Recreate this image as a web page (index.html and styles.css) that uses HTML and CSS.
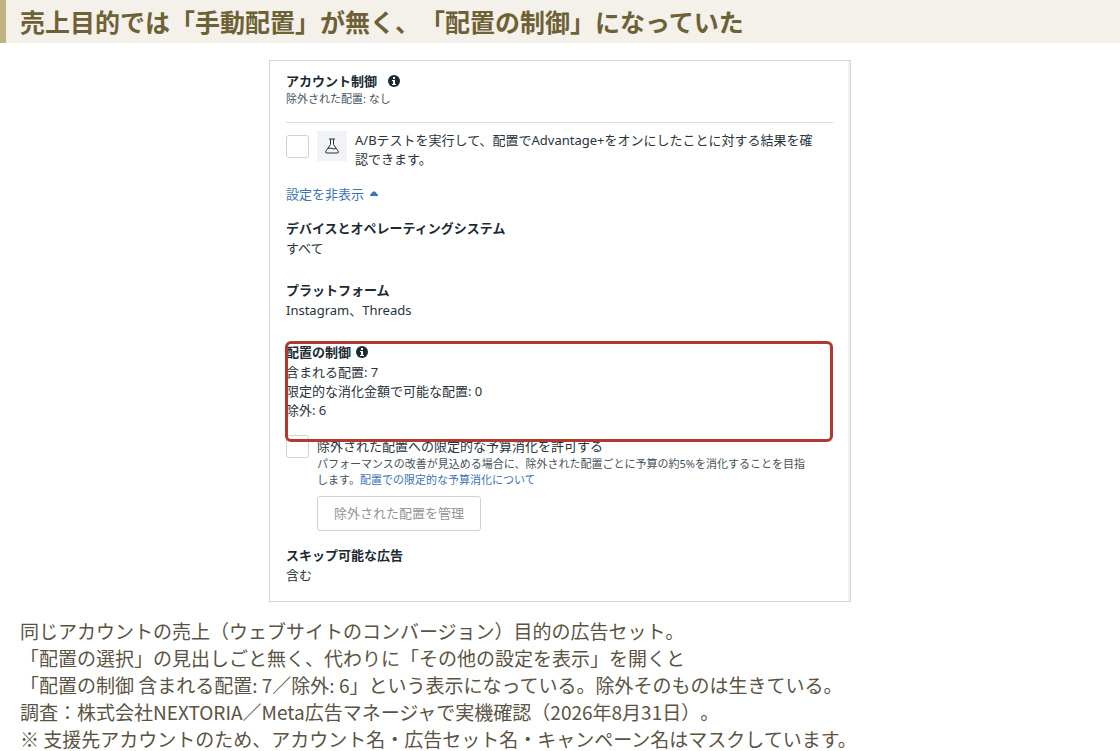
FILE: index.html
```html
<!DOCTYPE html>
<html lang="ja">
<head>
    <meta charset="UTF-8">
    <meta name="viewport" content="width=device-width, initial-scale=1.0">
    <title>配置の制御</title>
    <link rel="stylesheet" href="styles.css">
</head>
<body>

    <h1 class="titulo">売上目的では「手動配置」が無く、「配置の制御」になっていた</h1>

    <main class="panel">

        <section class="account">
            <h2>アカウント制御
                <svg class="info info-wide" viewBox="0 0 12 12" aria-hidden="true"><circle cx="6" cy="6" r="6"/><path d="M5 2h2v2H5zM4 5h3v4h1v1H4V9h1V6H4z"/></svg>
            </h2>
            <p class="small">除外された配置: なし</p>
        </section>

        <div class="ab-test">
            <div class="ab-icons">
                <input type="checkbox" id="abTest">
                <span class="flask">
                    <svg viewBox="0 0 16 16" aria-hidden="true"><path d="M5 1h6M6.500 1v5.500L1.800 13.200Q1 15 3 15h10q2 0 1.200-1.800L9.500 6.500V1M4 10.500q2-1 4 0t4 0"/></svg>
                </span>
            </div>
            <label for="abTest">A/Bテストを実行して、配置でAdvantage+をオンにしたことに対する結果を確<br>認できます。</label>
        </div>

        <a class="toggle" href="#settings">設定を非表示
            <svg viewBox="0 0 8 5" aria-hidden="true"><path d="M0 5V4l3-3.500h2L8 4v1z"/></svg>
        </a>

        <section class="group" id="settings">
            <h2>デバイスとオペレーティングシステム</h2>
            <p>すべて</p>
        </section>

        <section class="group">
            <h2>プラットフォーム</h2>
            <p>Instagram、Threads</p>
        </section>

        <section class="group control">
            <h2>配置の制御
                <svg class="info" viewBox="0 0 12 12" aria-hidden="true"><circle cx="6" cy="6" r="6"/><path d="M5 2h2v2H5zM4 5h3v4h1v1H4V9h1V6H4z"/></svg>
            </h2>
            <p>含まれる配置: 7</p>
            <p>限定的な消化金額で可能な配置: 0</p>
            <p>除外: 6</p>
        </section>

        <div class="allow">
            <input type="checkbox" id="allow">
            <div class="allow-text">
                <label for="allow">除外された配置への限定的な予算消化を許可する</label>
                <p class="small">パフォーマンスの改善が見込める場合に、除外された配置ごとに予算の約5%を消化することを目指<br>します。<a href="#about">配置での限定的な予算消化について</a></p>
                <button type="button" disabled>除外された配置を管理</button>
            </div>
        </div>

        <section class="group">
            <h2>スキップ可能な広告</h2>
            <p>含む</p>
        </section>

    </main>

    <p class="nota">
        同じアカウントの売上（ウェブサイトのコンバージョン）目的の広告セット。<br>
        「配置の選択」の見出しごと無く、代わりに「その他の設定を表示」を開くと<br>
        「配置の制御 含まれる配置: 7／除外: 6」という表示になっている。除外そのものは生きている。<br>
        調査：株式会社NEXTORIA／Meta広告マネージャで実機確認（2026年8月31日）。<br>
        ※ 支援先アカウントのため、アカウント名・広告セット名・キャンペーン名はマスクしています。
    </p>

</body>
</html>
```
FILE: styles.css
```css
* {
    box-sizing: border-box;
}
body {
    margin: 0;
    background: #fff;
    font-family: "Noto Sans CJK JP", sans-serif;
    color: #5b5344;
    text-spacing-trim: space-all;
}
h1, h2, p {
    margin: 0;
}
.titulo {
    padding: 3px 14px 4px;
    border-left: 6px solid #c1b283;
    background: #f4f1ea;
    color: #6f6136;
    font-size: 25px;
    font-weight: 700;
    line-height: 36px;
}

/* panel */
.panel {
    max-width: 582px;
    margin: 17px auto 15px;
    padding: 11px 17px 16px 16px;
    border: 1px solid #d9d6c8;
    box-shadow: inset -2px 0 #edf1f9;
    font-family: "Noto Sans", "Noto Sans CJK JP", sans-serif;
    font-size: 13px;
    line-height: 19px;
    color: #28333c;
}
.panel h2 {
    font-size: 13px;
    font-weight: 700;
    color: #1c2b33;
}
.panel .small {
    font-size: 11px;
    line-height: 16px;
    color: #46515b;
}
.panel a {
    color: #3b74b5;
    text-decoration: none;
}
.account {
    padding-bottom: 15px;
    border-bottom: 1px solid #dadde0;
}
.info {
    width: 12px;
    height: 12px;
    margin-left: 2px;
    vertical-align: -1px;
    fill: #1c2b33;
}
.info path {
    fill: #fff;
}
.info-wide {
    margin-left: 8px;
}
input[type="checkbox"] {
    appearance: none;
    flex: none;
    width: 23px;
    height: 23px;
    margin: 0;
    border: 1px solid #cfd3d7;
    border-radius: 3px;
    background: #fff;
}
.ab-test {
    display: flex;
    align-items: flex-start;
    gap: 8px;
    padding: 8px 0 16px;
}
.ab-icons {
    display: flex;
    align-items: center;
    gap: 8px;
}
.flask {
    display: flex;
    align-items: center;
    justify-content: center;
    flex: none;
    width: 30px;
    height: 30px;
    background: #f1f3f7;
}
.flask svg {
    width: 16px;
    height: 16px;
    fill: none;
    stroke: #28333c;
}
.toggle {
    display: block;
}
.toggle svg {
    width: 8px;
    height: 5px;
    margin-left: 3px;
    vertical-align: 3px;
    fill: #3b74b5;
}
.group {
    padding-top: 15px;
}
.group h2 {
    margin-bottom: 1px;
}
.group + .group {
    padding-top: 23px;
}

/* red frame around the placement controls */
.group.control {
    position: relative;
    padding-bottom: 15px;
}
.control::after {
    content: "";
    position: absolute;
    top: 21px;
    right: 0;
    bottom: -7px;
    left: -1px;
    border: 3px solid #b03a2e;
    border-radius: 6px;
    pointer-events: none;
}
.allow {
    display: flex;
    gap: 8px;
}
.allow-text {
    padding-top: 2px;
}
.allow-text label {
    display: block;
}
.allow button {
    height: 35px;
    margin-top: 8px;
    padding: 0 16px;
    border: 1px solid #cfd3d7;
    border-radius: 3px;
    background: #fff;
    color: #909497;
    font: inherit;
}

.nota {
    padding: 0 20px;
    font-size: 19px;
    line-height: 27px;
}
```
